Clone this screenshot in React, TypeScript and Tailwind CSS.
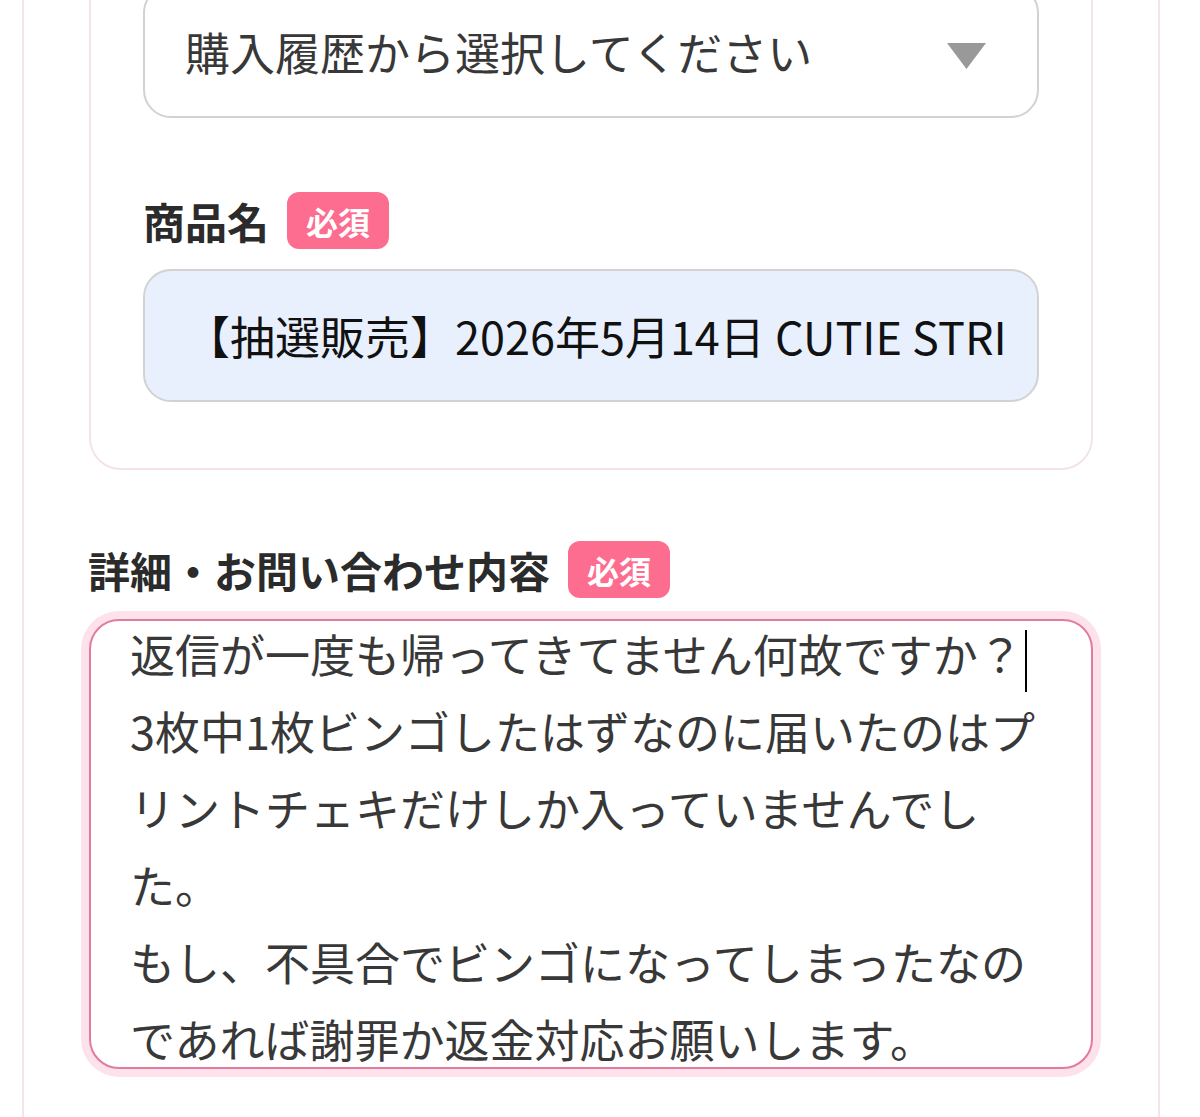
import React from "react";

const FONT = { fontFamily: '"Noto Sans CJK JP", "Noto Sans", sans-serif' };

const Badge = () => (
  <span className="inline-flex h-[57px] w-[102px] items-center justify-center rounded-[12px] bg-[#fd6d90] text-[32px] font-bold leading-none text-white">
    必須
  </span>
);

const Label = ({ text }: { text: string }) => (
  <div className="flex items-center gap-[18px]">
    <span className="text-[42px] font-bold leading-none text-[#2b2b2b]">{text}</span>
    <Badge />
  </div>
);

const lines = [
  "返信が一度も帰ってきてません何故ですか？",
  "3枚中1枚ビンゴしたはずなのに届いたのはプ",
  "リントチェキだけしか入っていませんでし",
  "た。",
  "もし、不具合でビンゴになってしまったなの",
  "であれば謝罪か返金対応お願いします。",
];

export default function App() {
  return (
    <div className="h-[1117px] w-full overflow-hidden bg-white" style={FONT}>
      <div className="flow-root ml-[22px] mr-[40px] h-full border-x-2 border-[#f3e6ea] px-[65px]">
        {/* purchase card */}
        <div className="-mt-[71px] rounded-[32px] border-2 border-[#f3e3e7] px-[52px] pt-[54px] pb-[66px]">
          <div className="flex h-[133px] items-center justify-between rounded-[28px] border-2 border-[#d2d2d2] bg-white pl-[40px] pr-[51px]">
            <span className="text-[45px] leading-none text-[#383838]">購入履歴から選択してください</span>
            <svg width="39" height="26" viewBox="0 0 39 26" className="mt-[8px]">
              <polygon points="0,0 39,0 19.5,26" fill="#999" />
            </svg>
          </div>

          <div className="mt-[74px] mb-[20px]">
            <Label text="商品名" />
          </div>

          <div className="flex h-[133px] items-center overflow-hidden whitespace-nowrap rounded-[28px] border-2 border-[#d2d2d2] bg-[#e8f0fd] pl-[40px] pr-[28px]">
            <span className="text-[45px] leading-none text-[#111]">
              【抽選販売】2026年5月14日 CUTIE STRI
            </span>
          </div>
        </div>

        <div className="mt-[71px] mb-[21px] -ml-[1px]">
          <Label text="詳細・お問い合わせ内容" />
        </div>

        <div className="relative h-[450px] overflow-hidden rounded-[30px] border-2 border-[#e27b9d] bg-white pl-[39px] shadow-[0_0_0_8px_#fde2eb]">
          <div className="-mt-[6px] whitespace-nowrap text-[45px] leading-[77px] text-[#383838]">
            {lines.map((l, i) => (
              <div key={i}>
                {l}
                {i === 0 && <span className="ml-[2px] inline-block h-[62px] w-[2px] bg-black align-middle" />}
              </div>
            ))}
          </div>
          <span className="absolute right-[3px] bottom-[5px] h-[4px] w-[4px] rounded-full bg-[#555]" />
        </div>
      </div>
    </div>
  );
}
